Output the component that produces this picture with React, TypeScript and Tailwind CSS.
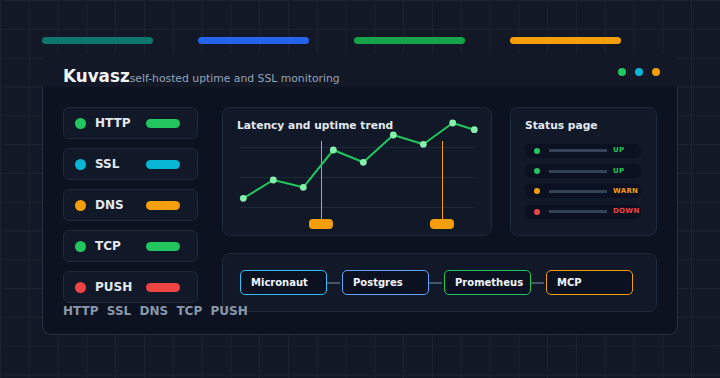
import React from 'react'

const checks = [
  { name: 'HTTP', color: 'bg-[#22c55e]' },
  { name: 'SSL', color: 'bg-[#06b6d4]' },
  { name: 'DNS', color: 'bg-[#f59e0b]' },
  { name: 'TCP', color: 'bg-[#22c55e]' },
  { name: 'PUSH', color: 'bg-[#ef4444]' },
]

const statuses = [
  { label: 'UP', dot: 'bg-[#22c55e]', text: 'text-[#22c55e]' },
  { label: 'UP', dot: 'bg-[#22c55e]', text: 'text-[#22c55e]' },
  { label: 'WARN', dot: 'bg-[#f59e0b]', text: 'text-[#f59e0b]' },
  { label: 'DOWN', dot: 'bg-[#ef4444]', text: 'text-[#ef4444]' },
]

const stack = [
  { name: 'Micronaut', border: 'border-[#38bdf8]' },
  { name: 'Postgres', border: 'border-[#60a5fa]' },
  { name: 'Prometheus', border: 'border-[#22c55e]' },
  { name: 'MCP', border: 'border-[#f59e0b]' },
]

const points: [number, number][] = [
  [21.3, 91.3], [51.3, 73], [81.3, 80.3], [111.3, 43], [141.3, 55.3],
  [171.3, 28], [201.3, 37.3], [230.7, 16], [252.3, 22.7],
]

function TrendChart() {
  return (
    <div className="grid h-[129px] w-[270px] rounded-[8px] border border-[#1e293b] bg-[#111827]">
      <svg className="col-start-1 row-start-1" width="268" height="127" viewBox="1 1 268 127">
        {[40.5, 70.5, 100.5].map((y) => (
          <line key={y} x1="18" x2="252" y1={y} y2={y} stroke="#1e293b" strokeWidth="1" />
        ))}
        <line x1="99.5" x2="99.5" y1="34" y2="113" stroke="#f59e0b" strokeWidth="1" />
        <line x1="220.5" x2="220.5" y1="34" y2="113" stroke="#f59e0b" strokeWidth="1" />
        <rect x="87" y="112" width="24" height="10" rx="4" fill="#f59e0b" />
        <rect x="208" y="112" width="24" height="10" rx="4" fill="#f59e0b" />
        <polyline
          points={points.map((p) => p.join(',')).join(' ')}
          fill="none"
          stroke="#22c55e"
          strokeWidth="2"
          strokeLinejoin="round"
        />
        {points.map(([x, y]) => (
          <circle key={x} cx={x} cy={y} r="3.4" fill="#86efac" />
        ))}
      </svg>
      <div className="col-start-1 row-start-1 pl-[14px] pt-[12.5px] text-[10.7px] font-bold leading-none text-[#e2e8f0]">
        Latency and uptime trend
      </div>
    </div>
  )
}

function StatusPage() {
  return (
    <div className="h-[129px] w-[147px] rounded-[8px] border border-[#1e293b] bg-[#111827] pl-[14px] pt-[12.5px]">
      <div className="text-[10.7px] font-bold leading-none text-[#e2e8f0]">Status page</div>
      <div className="mt-[12.7px] flex flex-col gap-[6.3px]">
        {statuses.map((s, i) => (
          <div key={i} className="flex h-[14px] w-[116px] items-center rounded-[5px] bg-[#0b1120]">
            <span className={`ml-[9px] h-[6px] w-[6px] rounded-full ${s.dot}`} />
            <span className="ml-[9px] h-[3px] w-[58px] bg-[#334155]" />
            <span className={`ml-[6px] text-[7px] font-bold leading-none tracking-[0.3px] ${s.text}`}>{s.label}</span>
          </div>
        ))}
      </div>
    </div>
  )
}

export default function App() {
  return (
    <div className="h-[378px] w-[720px] overflow-hidden bg-[#121826] bg-[linear-gradient(to_right,#1a2333_1px,transparent_1px),linear-gradient(to_bottom,#1a2333_1px,transparent_1px)] bg-[size:28.8px_28.8px] px-[42px] pt-[37px] font-['DejaVu_Sans',sans-serif]">
      <div className="flex gap-[45px]">
        <div className="h-[7px] w-[111px] rounded-full bg-[#0f766e]" />
        <div className="h-[7px] w-[111px] rounded-full bg-[#2563eb]" />
        <div className="h-[7px] w-[111px] rounded-full bg-[#16a34a]" />
        <div className="h-[7px] w-[111px] rounded-full bg-[#f59e0b]" />
      </div>

      <div className="mt-[10px] w-[636px] bg-[#121826]">
        <div className="flex h-[33px] justify-between pl-[21px] pr-[18px]">
          <div className="flex items-baseline self-end pb-[2px] leading-none">
            <span className="text-[16.8px] font-bold text-[#f1f5f9]">Kuvasz</span>
            <span className="text-[10.8px] text-[#94a3b8]">self-hosted uptime and SSL monitoring</span>
          </div>
          <div className="mt-[2px] flex items-center gap-[9px]">
            <span className="h-[8px] w-[8px] rounded-full bg-[#22c55e]" />
            <span className="h-[8px] w-[8px] rounded-full bg-[#06b6d4]" />
            <span className="h-[8px] w-[8px] rounded-full bg-[#f59e0b]" />
          </div>
        </div>

        <div className="flex h-[248px] gap-[24px] rounded-b-[9px] border-x border-b border-[#243044] bg-[#0c1220] pl-[20px] pt-[20px]">
          <div className="w-[135px]">
            <div className="flex flex-col gap-[9px]">
              {checks.map((c) => (
                <div key={c.name} className="flex h-[32px] items-center rounded-[6px] border border-[#1e293b] bg-[#111827] pl-[11px] pr-[17px]">
                  <span className={`h-[11px] w-[11px] rounded-full ${c.color}`} />
                  <span className="ml-[9px] text-[12px] font-bold leading-none text-[#e2e8f0]">{c.name}</span>
                  <span className={`ml-auto h-[9px] w-[34px] rounded-full ${c.color}`} />
                </div>
              ))}
            </div>
            <div className="relative z-10 mt-[1.5px] flex gap-[8.3px] whitespace-nowrap text-[12px] font-bold leading-none text-[#8a97ab]">
              <span>HTTP</span>
              <span>SSL</span>
              <span>DNS</span>
              <span>TCP</span>
              <span>PUSH</span>
            </div>
          </div>

          <div className="flex w-[435px] flex-col gap-[17px]">
            <div className="flex gap-[18px]">
              <TrendChart />
              <StatusPage />
            </div>
            <div className="flex h-[59px] items-center rounded-[8px] border border-[#1e293b] bg-[#111827] pl-[17px]">
              {stack.map((s, i) => (
                <React.Fragment key={s.name}>
                  {i > 0 && <span className="mr-[2px] h-[2px] w-[13px] bg-[#475569]" />}
                  <div className={`flex h-[25.5px] w-[87px] items-center rounded-[5px] border-[1.5px] bg-[#0b1120] pl-[10px] text-[10px] font-bold leading-none text-[#f1f5f9] ${s.border}`}>
                    {s.name}
                  </div>
                </React.Fragment>
              ))}
            </div>
          </div>
        </div>
      </div>
    </div>
  )
}
